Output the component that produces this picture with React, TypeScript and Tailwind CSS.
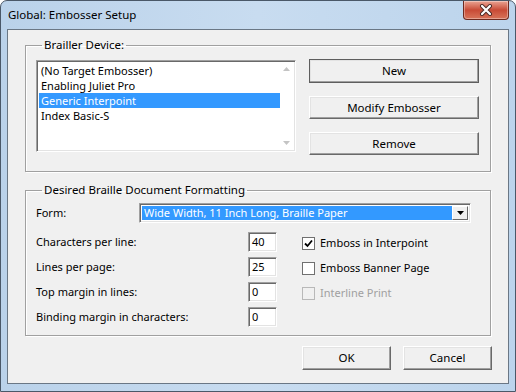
import React from "react";

const font = { fontFamily: '"Noto Sans", "Open Sans", sans-serif' };

const devices = [
  "(No Target Embosser)",
  "Enabling Juliet Pro",
  "Generic Interpoint",
  "Index Basic-S",
];

const fields = [
  { label: "Characters per line:", value: "40", check: "Emboss in Interpoint", checked: true, disabled: false },
  { label: "Lines per page:", value: "25", check: "Emboss Banner Page", checked: false, disabled: false },
  { label: "Top margin in lines:", value: "0", check: "Interline Print", checked: false, disabled: true },
  { label: "Binding margin in characters:", value: "0", check: "", checked: false, disabled: false },
];

const sunken =
  "border border-t-[#a0a0a0] border-l-[#a0a0a0] border-b-white border-r-white shadow-[inset_1px_1px_0_#696969,inset_-1px_-1px_0_#e3e3e3]";

const btn =
  "h-[23px] bg-[#f0f0f0] border border-t-white border-l-white border-b-[#696969] border-r-[#696969] shadow-[inset_-1px_-1px_0_#a0a0a0,inset_1px_1px_0_#e3e3e3] text-[11.5px] text-black";

const groupClass =
  "border border-[#a0a0a0] shadow-[inset_1px_1px_0_#fff,1px_1px_0_#fff] mx-[17px]";

function Legend({ children }: { children: React.ReactNode }) {
  return <legend className="ml-[6px] px-[2px] text-[11.5px] leading-[16px]">{children}</legend>;
}

function Checkbox({ label, checked, disabled }: { label: string; checked: boolean; disabled: boolean }) {
  return (
    <div className="flex items-center gap-[5px]">
      <span
        className={`w-[13px] h-[13px] border flex items-center justify-center ${
          disabled ? "border-[#b8b8b8] bg-[#f0f0f0]" : "border-[#707070] bg-white"
        }`}
      >
        {checked && (
          <svg width="9" height="9" viewBox="0 0 9 9">
            <path d="M1 4.5 L3.5 7 L8 1.5" stroke="#000" strokeWidth="1.8" fill="none" />
          </svg>
        )}
      </span>
      <span className={`text-[11px] ${disabled ? "text-[#a0a0a0]" : "text-black"}`}>{label}</span>
    </div>
  );
}

export default function App() {
  return (
    <div
      style={font}
      className="w-[516px] h-[392px] flex flex-col rounded-t-[7px] border border-[#4a5868] bg-gradient-to-r from-[#bad2ea] via-[#c8dcf0] to-[#bcd4ec] text-black overflow-hidden"
    >
      {/* title bar */}
      <div className="h-[28px] flex items-start justify-between pl-[7px]">
        <span className="mt-[6px] text-[11.5px] leading-[16px] text-black">Global: Embosser Setup</span>
        <div className="mr-[6px] w-[46px] h-[19px] rounded-b-[4px] border border-t-0 border-[#6e2a20] bg-gradient-to-b from-[#e9a393] via-[#c84a36] to-[#d8735a] flex items-center justify-center shadow-[inset_0_0_0_1px_rgba(255,255,255,0.35)]">
          <svg width="14" height="12" viewBox="0 0 14 12">
            <path d="M3 2 L11 10 M11 2 L3 10" stroke="#4a2a26" strokeWidth="4" strokeLinecap="round" />
            <path d="M3 2 L11 10 M11 2 L3 10" stroke="#fff" strokeWidth="2.2" strokeLinecap="round" />
          </svg>
        </div>
      </div>

      {/* client area */}
      <div className="mx-[6px] h-[355px] border border-[#6a7785] bg-[#f0f0f0] flex flex-col">
        <fieldset className={`${groupClass} mt-[7px] pl-[10px] pr-[9px] pb-[16px]`}>
          <Legend>Brailler Device:</Legend>
          <div className="flex mt-[7px]">
            <div className={`${sunken} w-[260px] h-[92px] bg-white flex p-[2px]`}>
              <ul className="flex-1 text-[11px]">
                {devices.map((d) => (
                  <li
                    key={d}
                    className={`pl-[2px] h-[15px] leading-[15px] ${
                      d === "Generic Interpoint" ? "bg-[#3399ff] text-white" : ""
                    }`}
                  >
                    {d}
                  </li>
                ))}
              </ul>
              <div className="w-[13px] flex flex-col justify-between items-center py-[4px]">
                <svg width="7" height="4" viewBox="0 0 7 4">
                  <path d="M0 4 L3.5 0 L7 4 Z" fill="#c4c4c4" />
                </svg>
                <svg width="7" height="4" viewBox="0 0 7 4">
                  <path d="M0 0 L3.5 4 L7 0 Z" fill="#c4c4c4" />
                </svg>
              </div>
            </div>
            <div className="ml-[13px] w-[170px] flex flex-col gap-[13px]">
              <button className={`${btn} -mt-[1px] h-[24px] outline outline-1 outline-[#5e5e5e] -outline-offset-1`}>New</button>
              <button className={btn}>Modify Embosser</button>
              <button className={btn}>Remove</button>
            </div>
          </div>
        </fieldset>

        <fieldset className={`${groupClass} mt-[10px] pl-[10px] pr-[18px] pb-[8px]`}>
          <Legend>Desired Braille Document Formatting</Legend>
          <div className="flex items-center mt-[5px]">
            <span className="w-[103px] text-[11px]">Form:</span>
            <div className={`${sunken} w-[332px] h-[20px] bg-white flex p-[2px]`}>
              <span className="flex-1 bg-[#3399ff] text-white text-[11px] leading-[14px] pl-[2px]">
                Wide Width, 11 Inch Long, Braille Paper
              </span>
              <span className="w-[16px] bg-[#f0f0f0] border border-t-white border-l-white border-b-[#696969] border-r-[#696969] flex items-center justify-center">
                <svg width="7" height="4" viewBox="0 0 7 4">
                  <path d="M0 0 L3.5 4 L7 0 Z" fill="#000" />
                </svg>
              </span>
            </div>
          </div>

          <div className="flex flex-col mt-[9px] gap-[5px]">
            {fields.map((f) => (
              <div key={f.label} className="flex items-center h-[20px]">
                <span className="w-[212px] text-[11px]">{f.label}</span>
                <div className={`${sunken} w-[29px] h-[20px] bg-white text-[11px] leading-[16px] pl-[3px] pt-[1px]`}>
                  {f.value}
                </div>
                {f.check && (
                  <div className="ml-[25px] mt-[2px]">
                    <Checkbox label={f.check} checked={f.checked} disabled={f.disabled} />
                  </div>
                )}
              </div>
            ))}
          </div>
        </fieldset>

        <div className="flex justify-end gap-[12px] mt-[10px] mr-[16px]">
          <button className={`${btn} w-[89px] h-[24px]`}>OK</button>
          <button className={`${btn} w-[89px] h-[24px]`}>Cancel</button>
        </div>
      </div>
    </div>
  );
}
